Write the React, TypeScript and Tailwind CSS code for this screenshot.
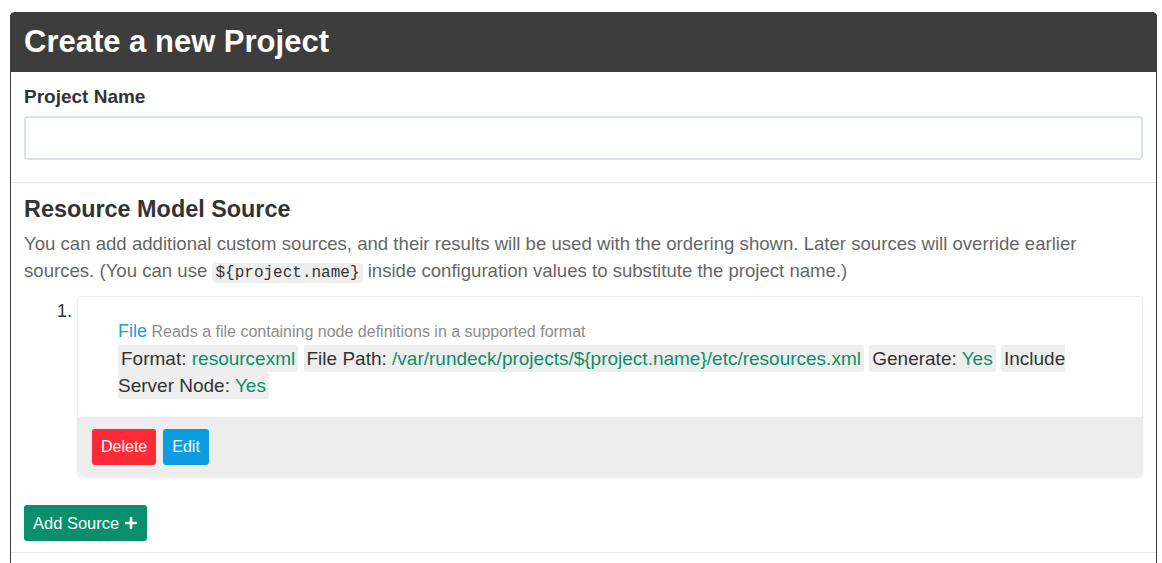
import { FaPlus } from "react-icons/fa";

// "Create a new Project" form — a dark-headed panel, name field, resource model list.

const SANS = "font-['Liberation_Sans',Arial,sans-serif]";

function Prop({ label, value }: { label: string; value: string }) {
  return (
    <span className="rounded-[3px] bg-[#eeeeee] px-[3px] py-[3px] text-[#333]">
      {label}: <span className="text-[#0b8f6a]">{value}</span>
    </span>
  );
}

function SourceCard() {
  return (
    <div className="flex-1 rounded-[5px] border border-[#ececec] bg-white shadow-[0_1px_3px_rgba(0,0,0,0.08)]">
      <div className="pl-[40px] pr-4 pt-[21px] pb-[18px]">
        <div className="leading-[27px]">
          <span className="text-[18px] text-[#1a9ad9]">File</span>{" "}
          <span className="text-[16px] text-[#8c8c8c]">Reads a file containing node definitions in a supported format</span>
        </div>
        <div className="text-[19px] leading-[27px]">
          <Prop label="Format" value="resourcexml" />{" "}
          <Prop label="File Path" value="/var/rundeck/projects/${project.name}/etc/resources.xml" />{" "}
          <Prop label="Generate" value="Yes" />{" "}
          <Prop label="Include Server Node" value="Yes" />
        </div>
      </div>
      <div className="flex gap-[7px] rounded-b-[5px] bg-[#ededed] px-[14px] pt-[12px] pb-[11px]">
        <button className="h-[36px] rounded-[3px] bg-[#fd2b38] px-[9px] text-[16px] font-medium text-white">Delete</button>
        <button className="h-[36px] rounded-[3px] bg-[#0d9ce0] px-[9px] text-[16px] font-medium text-white">Edit</button>
      </div>
    </div>
  );
}

export default function App() {
  return (
    <div className={`min-h-screen bg-white pt-[12px] pl-[10px] pr-[5px] ${SANS}`}>
      <div className="rounded-t-[5px] border-x border-[#3a3a3a]">
        <div className="-mx-px flex h-[60px] items-center rounded-t-[5px] bg-[#3d3d3d] px-[14px]">
          <h1 className="text-[31px] font-bold text-white">Create a new Project</h1>
        </div>

        <div className="border-b border-[#e8e8e8] px-[13px] pt-[14px] pb-[22px]">
          <label className="block text-[19px] font-bold leading-[22px] text-[#333]">Project Name</label>
          <input className="mt-[8px] block h-[44px] w-full rounded-[4px] border-2 border-[#d8e3ec] bg-white px-3 outline-none" />
        </div>

        <div className="border-b border-[#e8e8e8] px-[13px] pt-[12px] pb-[11px]">
          <h2 className="text-[23.4px] font-bold leading-[28px] text-[#333]">Resource Model Source</h2>
          <p className="mt-[7px] text-[18.6px] leading-[27px] text-[#666]">
            You can add additional custom sources, and their results will be used with the ordering shown. Later sources will override earlier sources. (You can use{" "}
            <code className="rounded-[4px] bg-[#eeeeee] px-[3px] py-px font-['Liberation_Mono',monospace] text-[16px] text-[#333]">{"${project.name}"}</code>{" "}
            inside configuration values to substitute the project name.)
          </p>

          <ol className="mt-[9px] flex items-start">
            <span className="w-[53px] pt-[2px] pr-[5px] text-right text-[18px] text-[#333]">1.</span>
            <SourceCard />
          </ol>

          <button className="mt-[28px] flex h-[36px] items-center gap-[5px] rounded-[3px] bg-[#098f6b] px-[9px] text-[16.5px] font-medium text-white">
            Add Source <FaPlus className="h-[14px] w-[14px]" />
          </button>
        </div>
        <div className="h-[20px]" />
      </div>
    </div>
  );
}
